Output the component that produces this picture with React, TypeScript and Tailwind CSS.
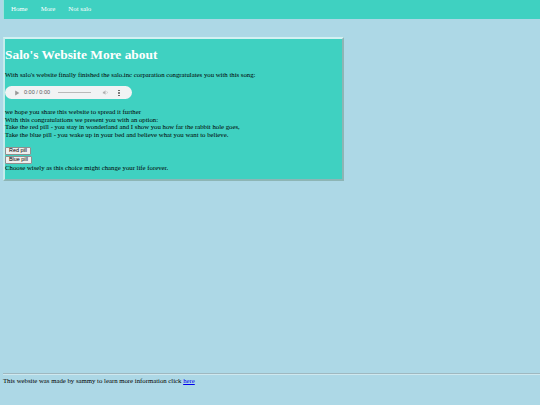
import React from "react";

const serif = { fontFamily: '"Liberation Serif", "Times New Roman", serif' };

function AudioBar() {
  return (
    <div className="flex items-center w-[127px] h-[13px] rounded-full bg-[#f1f3f4] text-[#3c3c3c]" style={{ fontFamily: '"Liberation Sans", Arial, sans-serif' }}>
      <svg width="6" height="6" viewBox="0 0 10 10" className="ml-[9px]">
        <path d="M2 1 L9 5 L2 9 Z" fill="#9a9a9a" />
      </svg>
      <span className="ml-[4px] text-[5.5px] leading-none text-[#555]">0:00 / 0:00</span>
      <div className="ml-[8px] w-[33px] h-[1px] bg-[#b9b9b9]" />
      <svg width="7" height="7" viewBox="0 0 24 24" className="ml-[11px]">
        <path d="M3 9v6h4l5 5V4L7 9H3z" fill="#b0b0b0" />
        <path d="M16 8a5 5 0 0 1 0 8" stroke="#b0b0b0" strokeWidth="2" fill="none" />
      </svg>
      <div className="ml-[9px] flex flex-col gap-[1px]">
        <div className="w-[1.5px] h-[1.5px] rounded-full bg-[#555]" />
        <div className="w-[1.5px] h-[1.5px] rounded-full bg-[#555]" />
        <div className="w-[1.5px] h-[1.5px] rounded-full bg-[#555]" />
      </div>
    </div>
  );
}

function Pill({ label }: { label: string }) {
  return (
    <button
      className="block h-[8px] px-[3px] bg-[#efefef] border border-[#8f8f8f] rounded-[1px] text-[5.4px] leading-none text-black"
      style={{ fontFamily: '"Liberation Sans", Arial, sans-serif' }}
    >
      {label}
    </button>
  );
}

export default function App() {
  return (
    <div className="min-h-[405px] bg-[#add8e6] flex flex-col text-black" style={serif}>
      <nav className="ml-[3px] h-[19px] bg-[#3fd1c1] flex items-center text-white text-[6.8px] leading-none border-l border-[#9fe3dc]">
        <a className="ml-[7px]">Home</a>
        <a className="ml-[13px]">More</a>
        <a className="ml-[13px]">Not salo</a>
      </nav>

      <section className="mt-[18px] ml-[3px] w-[341px] h-[144px] bg-[#3fd1c1] border-t-2 border-l-2 border-b-2 border-r-2 border-t-[#d2f1f2] border-l-[#c4ecec] border-b-[#8db5b5] border-r-[#8db5b5] text-[6.75px] leading-[7.4px]">
        <h1 className="mt-[8px] text-white font-bold text-[13.4px] leading-[15px]">Salo's Website More about</h1>
        <p className="mt-[9px]">With salo's website finally finished the salo.inc corparation congratulates you with this song:</p>
        <div className="mt-[8px]">
          <AudioBar />
        </div>
        <p className="mt-[9px]">
          we hope you share this website to spread it further
          <br />
          With this congratulations we present you with an option:
          <br />
          Take the red pill - you stay in wonderland and I show you how far the rabbit hole goes,
          <br />
          Take the blue pill - you wake up in your bed and believe what you want to believe.
        </p>
        <div className="mt-[9px] flex flex-col items-start gap-[1px]">
          <Pill label="Red pill" />
          <Pill label="Blue pill" />
        </div>
        <p>Choose wisely as this choice might change your life forever.</p>
      </section>

      <footer className="mt-auto mb-[21px] ml-[3px] text-[6.75px] leading-[7.4px]">
        <div className="h-[2px] border-t border-[#9fb8c0] border-b border-b-[#cfe8ef] mb-[2px]" />
        <p>
          This website was made by sammy to learn more information click{" "}
          <a className="text-[#0000ee] underline">here</a>
        </p>
      </footer>
    </div>
  );
}
